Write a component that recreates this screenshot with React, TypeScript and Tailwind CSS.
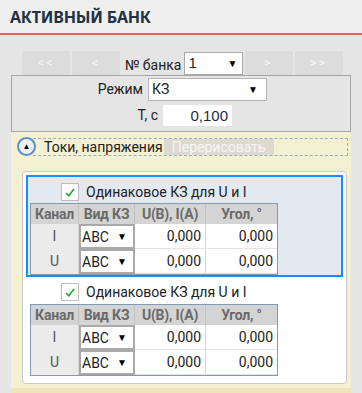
const font = "font-['Roboto','Noto_Sans',sans-serif]";

function NavButton({ label }: { label: string }) {
    return (
        <div className="w-[48px] h-[24px] mr-[2px] rounded-[2px] bg-[#dcdcdc] text-[#f7f7f7] text-[13px] tracking-[2px] flex items-center justify-center">
            {label}
        </div>
    );
}

function Arrow() {
    return <span className="text-[10px] text-black leading-none">▼</span>;
}

function CheckBox() {
    return (
        <div className="w-[18px] h-[18px] bg-white border border-[#bdbdbd] flex items-center justify-center">
            <svg width="10" height="9" viewBox="0 0 10 9">
                <path d="M1 5 L3.8 7.8 L9 1" fill="none" stroke="#1fa33a" strokeWidth="1.6" />
            </svg>
        </div>
    );
}

function KzTable() {
    const rows = ['I', 'U'];
    return (
        <div className="w-[248px] h-[72px] border border-[#7f9ab5] bg-white">
            <div className="grid grid-cols-[48px_56px_71px_71px] h-[20px] bg-[#d4d4d4] text-[14px] font-bold text-[#6a6a6a] leading-[20px] tracking-[-0.2px]">
                <div className="text-center border-r border-[#c2c2c2]">Канал</div>
                <div className="text-center border-r border-[#c2c2c2]">Вид КЗ</div>
                <div className="text-center border-r border-[#c2c2c2]">U(B), I(A)</div>
                <div className="text-center">Угол, °</div>
            </div>
            {rows.map((r, i) => (
                <div
                    key={r}
                    className={`grid grid-cols-[48px_56px_71px_71px] h-[25px] text-[14px] ${i === 0 ? 'border-b border-[#d6d6d6]' : ''}`}
                >
                    <div className="bg-[#ebebeb] text-[#555] text-center leading-[24px] border-r border-[#d6d6d6]">{r}</div>
                    <div className="bg-white border-2 border-[#a9a9a9] flex items-center justify-between pl-[1px] pr-[6px] text-[#222]">
                        <span className="leading-[20px]">ABC</span>
                        <Arrow />
                    </div>
                    <div className="bg-white text-right pr-[4px] leading-[24px] text-[#222] border-r border-[#d6d6d6] border-b border-b-[#e3e3e3]">0,000</div>
                    <div className="bg-white text-right pr-[4px] leading-[24px] text-[#222] border-b border-b-[#e3e3e3]">0,000</div>
                </div>
            ))}
        </div>
    );
}

function CheckRow() {
    return (
        <div className="flex items-center pl-[33px] h-[18px]">
            <CheckBox />
            <span className="ml-[7px] text-[14px] leading-[18px] text-[#222]">Одинаковое КЗ для U и I</span>
        </div>
    );
}

export default function App() {
    return (
        <div className={`w-[362px] h-[393px] overflow-hidden bg-[#e5e5e5] text-[#222] flex flex-col ${font}`}>
            {/* заголовок */}
            <div className="h-[35px] shrink-0 bg-[#efefef] border-b-2 border-[#e8614d] pl-[10px] flex items-center">
                <span className="font-['Noto_Sans',sans-serif] text-[16px] font-bold text-[#233143] tracking-[-0.2px]">АКТИВНЫЙ БАНК</span>
            </div>

            {/* навигация по банкам */}
            <div className="flex items-end pl-[22px] pt-[16px] h-[40px] shrink-0">
                <NavButton label="<<" />
                <NavButton label="<" />
                <span className="ml-[3px] mr-[2px] text-[14px] leading-[20px]">№ банка</span>
                <div className="w-[59px] h-[23px] mr-[2px] bg-white border border-[#a8a8a8] flex items-center justify-between px-[4px] font-['Liberation_Sans',sans-serif] text-[15px]">
                    <span>1</span>
                    <Arrow />
                </div>
                <NavButton label=">" />
                <NavButton label=">>" />
            </div>

            <div className="mx-[11px] h-[57px] shrink-0 border border-[#a6a6a6] pt-[2px]">
                <div className="flex items-center h-[23px]">
                    <span className="w-[131px] text-right text-[14px] leading-[23px]">Режим</span>
                    <div className="ml-[5px] w-[119px] h-[23px] bg-white border border-[#b5b5b5] flex items-center justify-between pl-[3px] pr-[8px] text-[14px]">
                        <span>КЗ</span>
                        <Arrow />
                    </div>
                </div>
                <div className="flex items-center mt-[4px] h-[21px]">
                    <span className="w-[146px] text-right text-[14px] leading-[21px]">T, c</span>
                    <div className="ml-[5px] w-[69px] h-[21px] bg-white text-right pr-[4px] leading-[21px] text-[15px] text-[#1f2a44] font-['Liberation_Sans',sans-serif]">0,100</div>
                </div>
            </div>

            {/* токи и напряжения */}
            <div className="mx-[11px] flex-1 bg-[#f4f0d3] flex flex-col">
                <div className="flex items-center pl-[6px] pr-[3px] mt-[5px] h-[19px]">
                    <div className="relative z-10 w-[19px] h-[19px] rounded-full border-2 border-[#5b8fc4] bg-[#eef1f4] flex items-center justify-center">
                        <span className="text-[8px] text-black leading-none">▲</span>
                    </div>
                    <div className="-ml-[3px] flex-1 h-[18px] border border-dashed border-[#8fb1bf] border-l-0 flex items-center pl-[11px]">
                        <span className="text-[14px] leading-[16px] text-[#222]">Токи, напряжения</span>
                        <span className="ml-[1px] w-[110px] h-[16px] bg-[#dcdad1] text-[#f6f6f6] text-[14px] leading-[16px] text-center">Перерисовать</span>
                    </div>
                </div>

                <div className="ml-[11px] w-[325px] h-[213px] shrink-0 mt-[15px] rounded-[4px] border border-[#c9c9c9] bg-white px-[3px] pt-[3px]">
                    <div className="h-[102px] border-2 border-[#1a8cff] bg-[#e3e9f1] pt-[6px]">
                        <CheckRow />
                        <div className="ml-[2px] mt-[2px]">
                            <KzTable />
                        </div>
                    </div>
                    <div className="pt-[6px] px-[2px]">
                        <CheckRow />
                        <div className="ml-[2px] mt-[3px]">
                            <KzTable />
                        </div>
                    </div>
                </div>
                <div className="mt-[4px] flex-1 bg-[#f0e5b8]" />
            </div>
        </div>
    );
}
